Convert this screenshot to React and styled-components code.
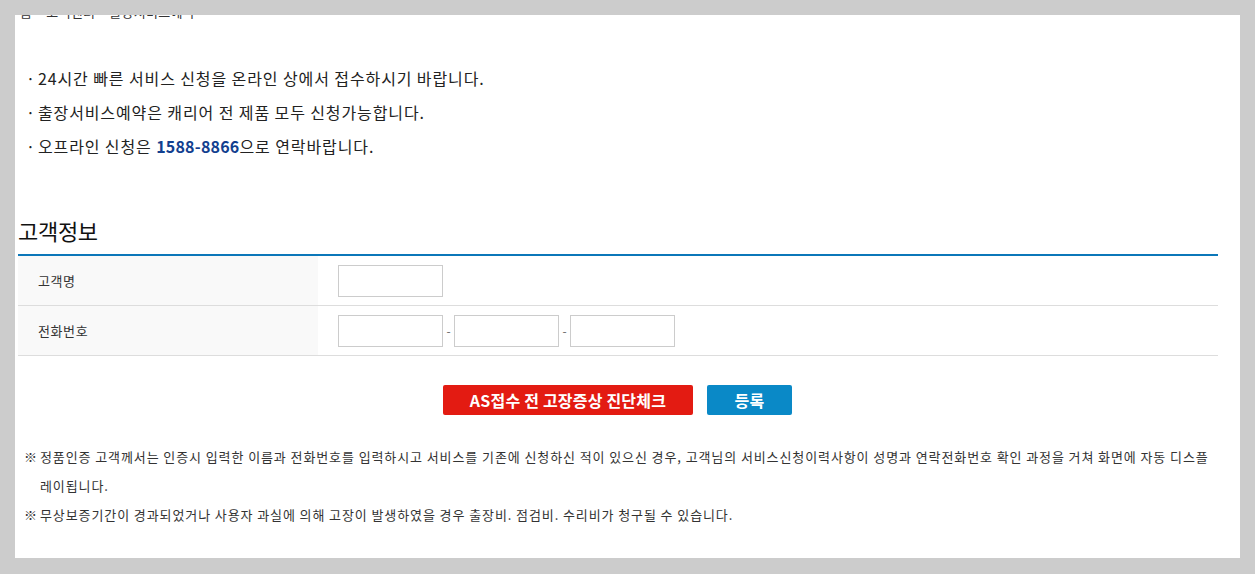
import React from "react";
import styled, { createGlobalStyle } from "styled-components";

const GlobalStyle = createGlobalStyle`
  html, body {
    margin: 0;
    padding: 0;
    background: #cccccc;
  }
  body {
    font-family: "Noto Sans CJK KR", "Noto Sans", sans-serif;
    color: #222;
  }
`;

const Page = styled.div`
  padding: 15px 15px 16px;
`;

const Panel = styled.div`
  width: 1225px;
  height: 543px;
  background: #fff;
  overflow: hidden;
  box-sizing: border-box;
  padding-left: 3px;
`;

const Breadcrumb = styled.div`
  margin-top: -12px;
  padding-left: 2px;
  font-size: 13px;
  line-height: 18px;
  color: #333;
  letter-spacing: 0.3px;
`;

const Guide = styled.ul`
  list-style: none;
  margin: 40px 0 0;
  padding: 0 0 0 8px;
`;

const GuideItem = styled.li`
  font-size: 16px;
  line-height: 34px;
  color: #222;
  letter-spacing: 0.9px;

  &::before {
    content: "·";
    margin-right: 2px;
  }

  strong {
    color: #123f8f;
    font-weight: 700;
    letter-spacing: 0.2px;
  }
`;

const SectionTitle = styled.h3`
  margin: 52px 0 0;
  font-size: 22px;
  font-weight: 400;
  line-height: 30px;
  color: #111;
  letter-spacing: -0.3px;
`;

const Table = styled.div`
  width: 1200px;
  margin-top: 9px;
  border-top: 2px solid #0b77b9;
`;

const Row = styled.div`
  display: flex;
  height: 49px;
  border-bottom: 1px solid #dddddd;
`;

const Label = styled.div`
  width: 300px;
  background: #f9f9f9;
  padding-left: 20px;
  box-sizing: border-box;
  display: flex;
  align-items: center;
  font-size: 13px;
  color: #333;
  letter-spacing: 0.6px;
`;

const Field = styled.div`
  display: flex;
  align-items: center;
  padding-left: 20px;
`;

const Input = styled.input`
  width: 105px;
  height: 32px;
  box-sizing: border-box;
  border: 1px solid #cccccc;
  margin: 0;
  padding: 0 6px;
  outline: none;
`;

const Dash = styled.span`
  width: 11px;
  text-align: center;
  font-size: 12px;
  color: #666;
`;

const Buttons = styled.div`
  width: 1199px;
  display: flex;
  justify-content: center;
  gap: 14px;
  margin-top: 29px;
`;

const Button = styled.button`
  width: ${({ $w }) => $w}px;
  height: 30px;
  border: 0;
  border-radius: 2px;
  background: ${({ $bg }) => $bg};
  color: #fff;
  font-family: "Noto Sans CJK KR", sans-serif;
  font-size: 16px;
  font-weight: 700;
  letter-spacing: 0.2px;
  padding: 0;
  cursor: pointer;
`;

const Notes = styled.ul`
  list-style: none;
  margin: 27px 0 0;
  padding: 0 0 0 6px;
`;

const Note = styled.li`
  position: relative;
  padding-left: 16px;
  font-size: 13px;
  line-height: 29px;
  color: #333;
  letter-spacing: 0.9px;
  width: 1180px;

  &::before {
    content: "※";
    position: absolute;
    left: 0;
  }
`;

const App = () => {
  return (
    <Page>
      <GlobalStyle />
      <Panel>
        <Breadcrumb>홈 &gt; 고객센터 &gt; 출장서비스예약</Breadcrumb>
        <Guide>
          <GuideItem>24시간 빠른 서비스 신청을 온라인 상에서 접수하시기 바랍니다.</GuideItem>
          <GuideItem>출장서비스예약은 캐리어 전 제품 모두 신청가능합니다.</GuideItem>
          <GuideItem>
            오프라인 신청은 <strong>1588-8866</strong>으로 연락바랍니다.
          </GuideItem>
        </Guide>
        <SectionTitle>고객정보</SectionTitle>
        <Table>
          <Row>
            <Label>고객명</Label>
            <Field>
              <Input type="text" />
            </Field>
          </Row>
          <Row>
            <Label>전화번호</Label>
            <Field>
              <Input type="text" />
              <Dash>-</Dash>
              <Input type="text" />
              <Dash>-</Dash>
              <Input type="text" />
            </Field>
          </Row>
        </Table>
        <Buttons>
          <Button $w={250} $bg="#e31b12">AS접수 전 고장증상 진단체크</Button>
          <Button $w={85} $bg="#0a89c7">등록</Button>
        </Buttons>
        <Notes>
          <Note>
            정품인증 고객께서는 인증시 입력한 이름과 전화번호를 입력하시고 서비스를 기존에 신청하신 적이 있으신 경우, 고객님의 서비스신청이력사항이 성명과 연락전화번호 확인 과정을 거쳐 화면에 자동 디스플레이됩니다.
          </Note>
          <Note>
            무상보증기간이 경과되었거나 사용자 과실에 의해 고장이 발생하였을 경우 출장비. 점검비. 수리비가 청구될 수 있습니다.
          </Note>
        </Notes>
      </Panel>
    </Page>
  );
};

export default App;
